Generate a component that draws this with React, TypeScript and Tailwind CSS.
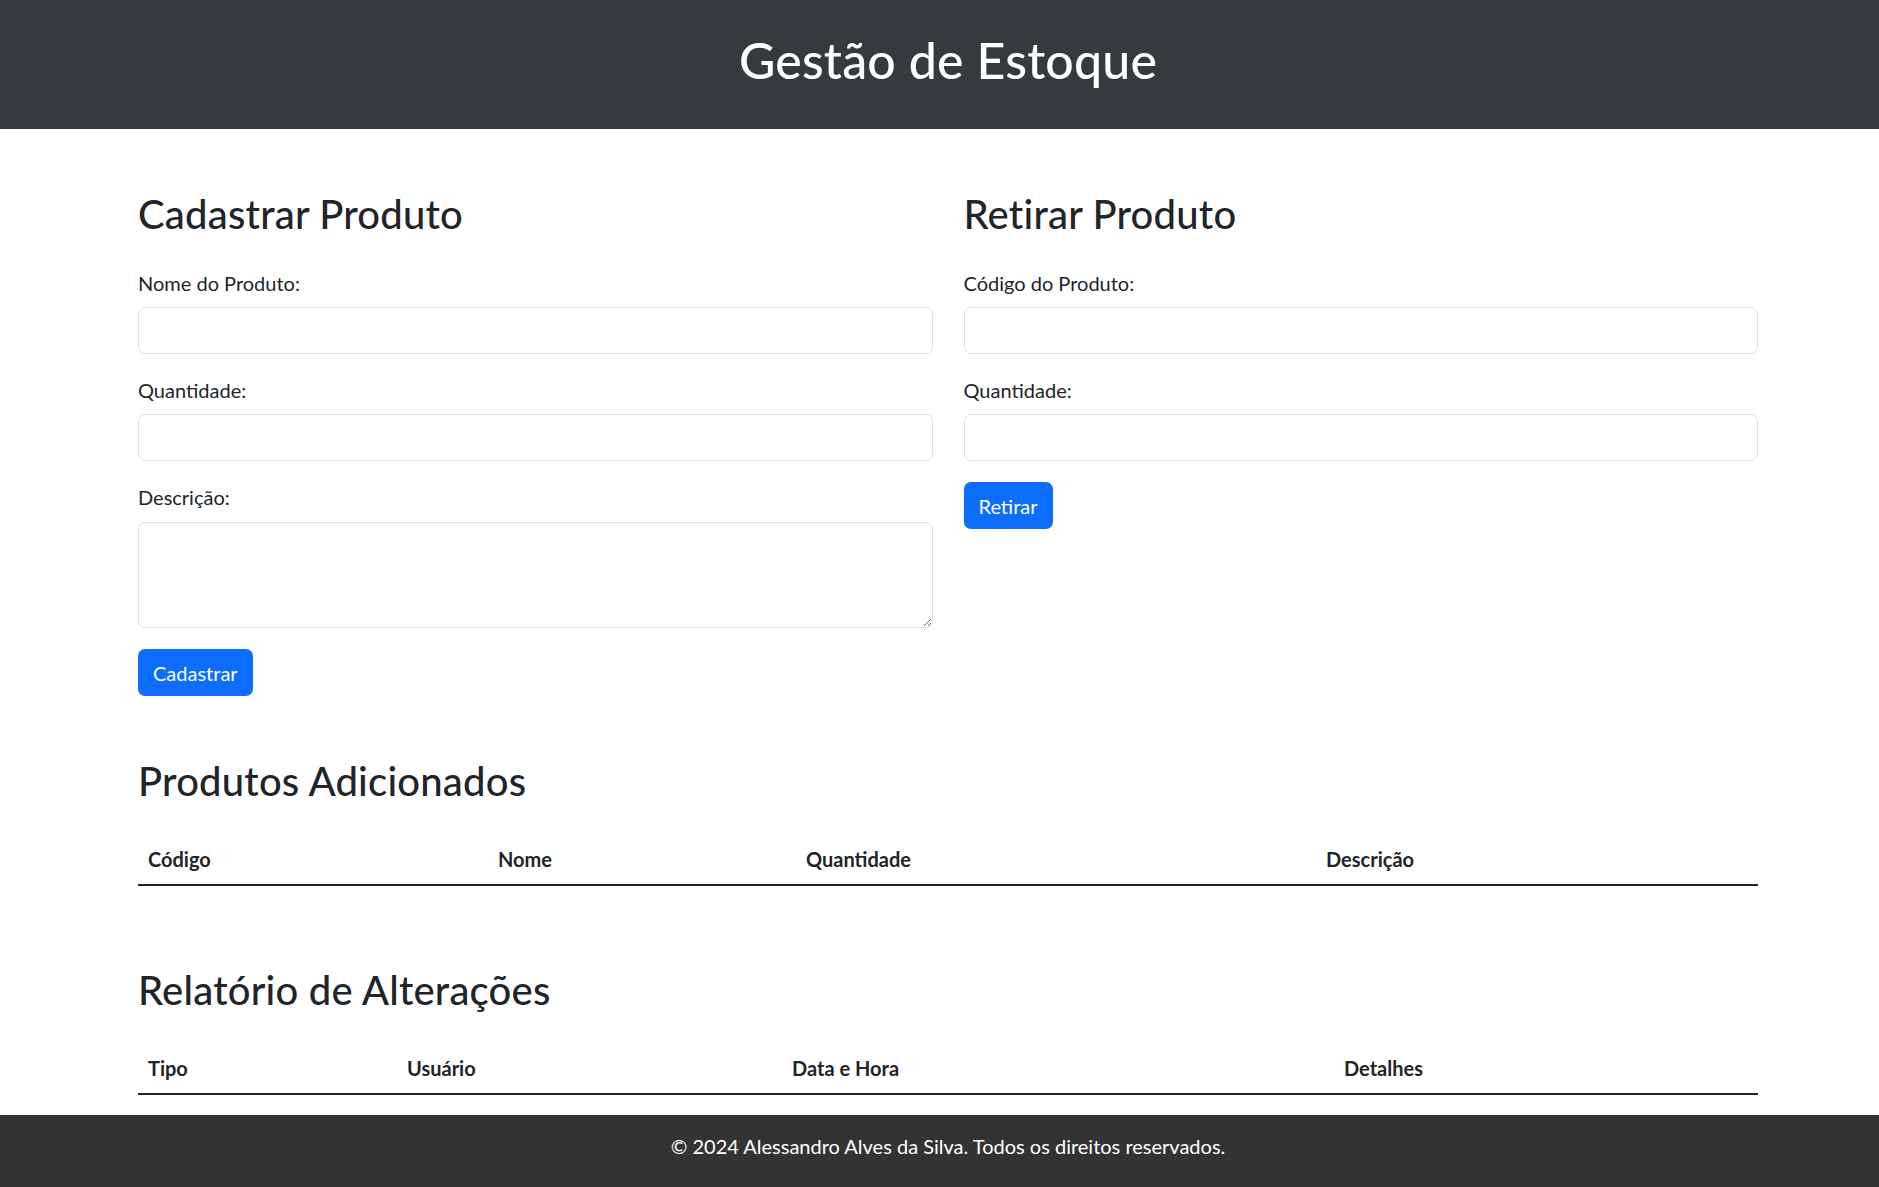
import React from "react";

const font = { fontFamily: "Lato, 'Noto Sans', sans-serif" };

function Field({ label, area }: { label: string; area?: boolean }) {
  return (
    <div className="flex flex-col">
      <label className="text-[20px] leading-[30px] text-[#212529]">{label}</label>
      {area ? (
        <textarea className="mt-[10px] h-[106px] w-full rounded-[7px] border border-[#dee2e6] bg-white px-[15px] py-[7px] text-[20px] outline-none" />
      ) : (
        <input className="mt-[9px] h-[47px] w-full rounded-[7px] border border-[#dee2e6] bg-white px-[15px] text-[20px] outline-none" />
      )}
    </div>
  );
}

function Btn({ children }: { children: React.ReactNode }) {
  return (
    <button className="h-[47px] rounded-[7px] bg-[#0d6efd] px-[15px] text-[20px] leading-[30px] text-white">
      {children}
    </button>
  );
}

function H2({ children }: { children: React.ReactNode }) {
  return <h2 className="text-[40px] font-medium leading-[48px] tracking-[0.2px] text-[#212529]">{children}</h2>;
}

export default function App() {
  return (
    <div style={font} className="flex min-h-[1187px] flex-col bg-white text-[#212529]">
      <header className="flex h-[129px] items-center justify-center bg-[#343a40] pb-[9px] pl-[17px]">
        <h1 className="text-[50px] font-medium leading-[60px] tracking-[0.2px] text-white">Gestão de Estoque</h1>
      </header>

      <main className="ml-[138px] w-[1620px] flex-1">
        <div className="mt-[61px] grid grid-cols-2 gap-x-[31px]">
          <div className="flex flex-col">
            <H2>Cadastrar Produto</H2>
            <div className="mt-[30px] flex flex-col gap-[21px]">
              <Field label="Nome do Produto:" />
              <Field label="Quantidade:" />
              <Field label="Descrição:" area />
            </div>
            <div className="mt-[21px]">
              <Btn>Cadastrar</Btn>
            </div>
          </div>
          <div className="flex flex-col">
            <H2>Retirar Produto</H2>
            <div className="mt-[30px] flex flex-col gap-[21px]">
              <Field label="Código do Produto:" />
              <Field label="Quantidade:" />
            </div>
            <div className="mt-[21px]">
              <Btn>Retirar</Btn>
            </div>
          </div>
        </div>

        <section className="mt-[61px]">
          <H2>Produtos Adicionados</H2>
          <div className="mt-[29px] grid grid-cols-[350px_308px_520px_1fr] border-b-2 border-[#212529]">
            {["Código", "Nome", "Quantidade", "Descrição"].map((t) => (
              <div key={t} className="px-[10px] py-[10px] text-[20px] font-bold leading-[30px]">
                {t}
              </div>
            ))}
          </div>
        </section>

        <section className="mt-[80px] mb-[20px]">
          <H2>Relatório de Alterações</H2>
          <div className="mt-[29px] grid grid-cols-[259px_385px_552px_1fr] border-b-2 border-[#212529]">
            {["Tipo", "Usuário", "Data e Hora", "Detalhes"].map((t) => (
              <div key={t} className="px-[10px] py-[10px] text-[20px] font-bold leading-[30px]">
                {t}
              </div>
            ))}
          </div>
        </section>
      </main>

      <footer className="flex h-[75px] justify-center bg-[#333333] pl-[17px] pt-[16px]">
        <p className="text-[20px] leading-[30px] text-white">
          © 2024 Alessandro Alves da Silva. Todos os direitos reservados.
        </p>
      </footer>
    </div>
  );
}
